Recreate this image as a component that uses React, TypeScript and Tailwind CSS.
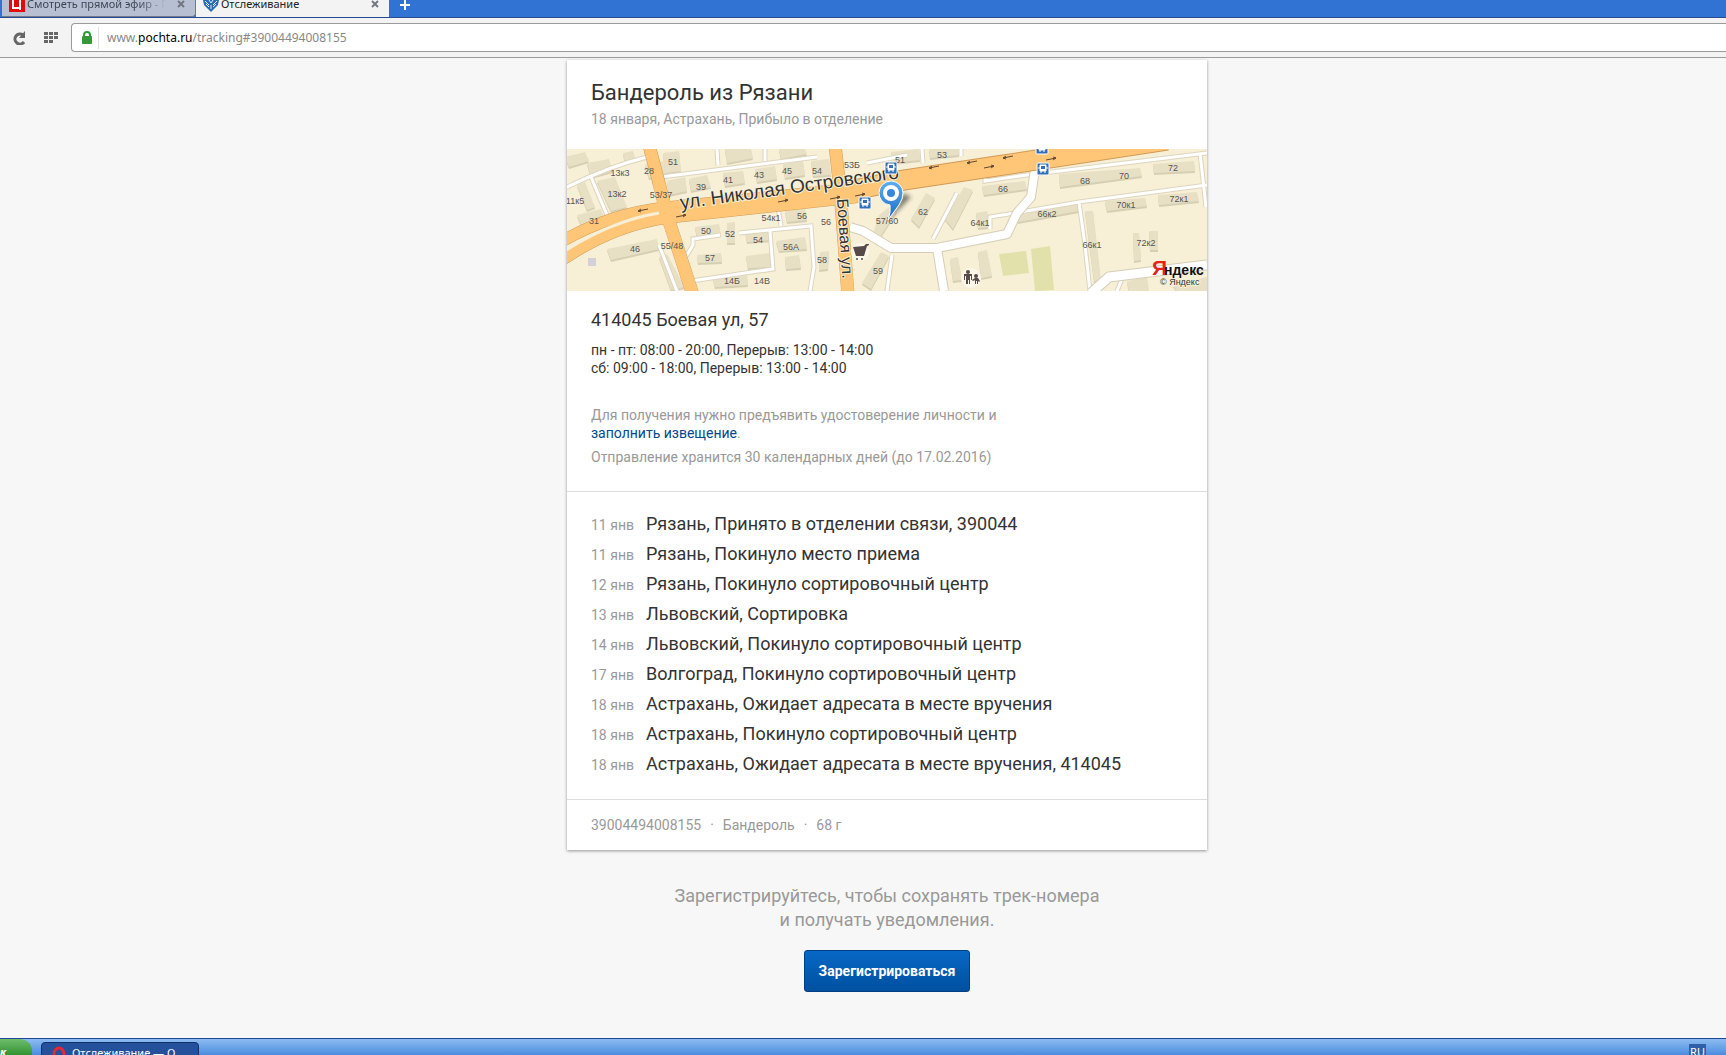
import React from "react";

const ROBOTO = "font-[Roboto,'Noto_Sans',sans-serif]";

type Pt = [number, number];

const buildings: string[] = [
  "M-2 8 L18 3 L22 12 L2 18Z M20 14 L42 10 L46 22 L24 28Z M56 4 L66 2 L69 11 L58 14Z",
  "M30 32 L48 28 L60 58 L44 62Z M10 36 L18 33 L28 58 L20 61Z M10 66 L34 60 L38 72 L14 76Z",
  "M78 16 L96 12 L98 26 L82 29Z M96 4 L112 2 L114 22 L98 24Z",
  "M100 32 L118 28 L120 42 L102 46Z M122 30 L140 26 L144 38 L124 42Z",
  "M156 24 L176 22 L178 34 L158 37Z M188 20 L208 17 L210 30 L190 33Z M216 15 L236 12 L238 26 L218 29Z M244 12 L262 10 L264 26 L246 27Z",
  "M158 0 L184 0 L186 9 L160 14Z M212 0 L238 0 L240 5 L214 10Z",
  "M40 100 L90 90 L92 100 L44 111Z M128 78 L152 75 L154 86 L130 88Z M160 74 L168 73 L168 94 L160 94Z",
  "M178 82 L204 80 L206 91 L180 93Z M218 62 L238 60 L240 71 L220 73Z M179 107 L203 104 L204 118 L181 119Z",
  "M209 92 L238 88 L240 100 L212 102Z M218 108 L232 106 L234 119 L219 120Z M253 103 L262 102 L261 120 L252 121Z",
  "M130 106 L154 104 L155 113 L131 114Z M146 129 L180 126 L181 136 L148 138Z M92 108 L100 105 L118 138 L104 141Z",
  "M314 103 L322 107 L304 140 L295 134Z M312 66 L325 56 L330 62 L312 90 L306 85Z",
  "M344 70 L359 44 L368 49 L352 78Z M378 70 L397 38 L406 41 L386 80Z",
  "M415 37 L458 32 L460 40 L417 46Z M450 63 L510 53 L512 62 L451 73Z M492 25 L573 19 L575 27 L493 38Z",
  "M538 52 L578 49 L580 57 L540 62Z M586 15 L627 12 L628 22 L587 24Z M591 46 L630 43 L632 52 L592 56Z",
  "M518 62 L526 62 L534 132 L527 132Z M566 84 L572 84 L574 111 L567 112Z M582 82 L591 82 L591 101 L583 101Z",
  "M383 110 L391 108 L395 131 L386 132Z M411 103 L420 101 L425 127 L414 129Z M409 64 L420 62 L423 78 L411 79Z",
  "M324 3 L352 0 L353 11 L325 14Z M362 0 L391 0 L392 6 L363 9Z M560 132 L580 128 L582 142 L562 142Z M606 136 L640 128 L640 142 L610 142Z",
];

const whiteRoads: string[] = [
  "M-4 40 Q40 18 80 8",
  "M24 28 L40 66",
  "M94 28 L250 8",
  "M150 0 L151 16 M198 0 L198 12 M300 14 L340 6 M355 0 L356 14 M394 0 L394 7",
  "M211 58 L214 77 M118 109 L126 96 L126 90 L153 86 M172 84 L244 77 L247 118 L243 142",
  "M203 82 L206 120 L124 132 M92 96 L110 142",
  "M418 24 L418 32 L460 26 L640 4 M633 4 L639 58",
  "M366 90 L390 44 M423 80 L423 68 L448 64 L512 53 L640 36 M512 53 L518 96 L523 142 M555 130 L550 142 M325 106 L320 142",
];

const labels: [string, number, number][] = [
  ["13к3", 53, 27], ["28", 82, 25], ["51", 106, 16], ["13к2", 50, 48], ["11к5", 8, 55], ["53/37", 94, 49],
  ["31", 27, 75], ["39", 134, 41], ["41", 161, 34], ["43", 192, 29], ["45", 220, 25], ["54", 250, 25],
  ["53Б", 285, 19], ["46", 68, 103], ["55/48", 105, 100], ["50", 139, 85], ["52", 163, 88], ["54", 191, 94],
  ["54к1", 204, 72], ["56", 235, 70], ["56", 259, 76], ["56А", 224, 101], ["57", 143, 112], ["58", 255, 114],
  ["14Б", 165, 135], ["14В", 195, 135], ["57/60", 320, 75], ["59", 311, 125], ["62", 356, 66], ["51", 333, 14],
  ["53", 375, 9], ["66", 436, 43], ["64к1", 413, 77], ["66к2", 480, 68], ["68", 518, 35], ["70", 557, 30],
  ["72", 606, 22], ["70к1", 559, 59], ["72к1", 612, 53], ["66к1", 525, 99], ["72к2", 579, 97],
];

const arrowsLeft: Pt[] = [[76, 61], [367, 18], [405, 13], [441, 8]];
const arrowsRight: Pt[] = [[114, 67], [216, 52], [268, 49], [293, 46], [422, 18], [484, 10]];

function BusStop({ x, y }: { x: number; y: number }) {
  return (
    <g transform={`translate(${x} ${y})`}>
      <rect x="-6" y="-6" width="12" height="12" rx="1" fill="#3271b5" stroke="#fff" strokeWidth="1" />
      <path d="M-3 -4 h6 v6 h-6z M-4 -2 v2 M4 -2 v2 M-2 2 v2 M2 2 v2" fill="#fff" stroke="#fff" />
      <rect x="-2" y="-3" width="4" height="3" fill="#3271b5" />
    </g>
  );
}

function MapPicture() {
  return (
    <svg
      viewBox="0 0 640 142"
      preserveAspectRatio="xMidYMid slice"
      className="block h-[142px] w-full"
      fontFamily="'Liberation Sans', sans-serif"
      role="img"
      aria-label="Карта: Боевая ул, 57"
    >
      <defs>
        <linearGradient id="pin" gradientUnits="userSpaceOnUse" x1="0" y1="32" x2="0" y2="71">
          <stop offset="0" stopColor="#5eb0ee" />
          <stop offset="1" stopColor="#1c68c4" />
        </linearGradient>
        <filter id="soft" x="-50%" y="-50%" width="200%" height="200%">
          <feGaussianBlur stdDeviation="2" />
        </filter>
      </defs>
      <rect width="640" height="142" fill="#f7efd6" />
      <path d="M464 100 L483 97 L487 141 L468 142Z M432 105 L459 102 L462 124 L436 127Z" fill="#e2e1ac" />
      {buildings.map((d) => (
        <g key={d}>
          <path d={d} fill="#d6cfb4" transform="translate(0 2)" />
          <path d={d} fill="#e8e0c5" />
        </g>
      ))}
      <rect x="21" y="109" width="8" height="8" fill="#d5cfda" />
      <g fill="none" stroke="#ddd5be" strokeWidth="5">
        {whiteRoads.map((d) => <path key={d} d={d} />)}
      </g>
      <g fill="none" stroke="#fff" strokeWidth="3">
        {whiteRoads.map((d) => <path key={d} d={d} />)}
      </g>
      {[
        { color: "#d5cdb6", extra: 2 },
        { color: "#fff", extra: 0 },
      ].map(({ color, extra }) => (
        <g key={color} fill="none" stroke={color} strokeLinejoin="round">
          <path d="M283 78 L296 82 L324 99 L370 99 L440 85 L450 64 L464 48 L468 20" strokeWidth={8 + extra} />
          <path d="M370 99 L377 142" strokeWidth={8 + extra} />
          <path d="M524 144 L542 128 L640 116" strokeWidth={9 + extra} />
        </g>
      ))}
      {[
        { color: "#d39a55", extra: 1 },
        { color: "#ffc677", extra: 0 },
      ].map(({ color, extra }) => (
        <g key={color} fill="none" stroke={color}>
          <path d="M82 -4 L92 34 L100 66 L126 146" strokeWidth={12 + extra} />
          <path d="M268 -4 L273 40 L281 146" strokeWidth={12 + extra} />
          <path d="M-6 93 Q40 66 94 59 L300 38" strokeWidth={11 + extra} />
          <path d="M-6 112 Q42 78 98 69 L300 47" strokeWidth={11 + extra} />
          <path d="M268 45 L330 32 L430 17 L600 -9" strokeWidth={19 + extra * 2} />
        </g>
      ))}
      <path d="M92 35 L100 66 L126 146 M273 36 L281 146" fill="none" stroke="#ffc677" strokeWidth="12" />
      <path d="M-4 103 Q44 72 92 64" fill="none" stroke="#f7efd6" strokeWidth="3" />
      <g fill="none" stroke="#5f4631" strokeWidth="1">
        {arrowsLeft.map(([x, y]) => (
          <path key={x} d="M5 -1 L-5 1 M-2 -1 L-5 1 L-2 2" transform={`translate(${x} ${y})`} />
        ))}
        {arrowsRight.map(([x, y]) => (
          <path key={x} d="M-5 1 L5 -1 M2 -2 L5 -1 L2 1" transform={`translate(${x} ${y})`} />
        ))}
      </g>
      <g fontSize="9" fill="#555" textAnchor="middle">
        {labels.map(([text, x, y]) => (
          <text key={`${text}-${x}`} x={x} y={y}>{text}</text>
        ))}
      </g>
      <g fill="#333" stroke="#f7efd6" strokeWidth="2" paintOrder="stroke">
        <text fontSize="19" transform="translate(114 60) rotate(-8)">ул. Николая Островского</text>
        <text fontSize="16" transform="translate(270 50) rotate(86)">Боевая ул.</text>
      </g>
      <BusStop x={298} y={54} />
      <BusStop x={324} y={19} />
      <BusStop x={475} y={-1} />
      <BusStop x={476} y={20} />
      <circle cx="293" cy="103" r="9" fill="#fbf7e9" />
      <g fill="#574b49">
        <path d="M286 98 L297 97 L299 95 L302 95 L302 96 L300 97 L297 107 L289 107Z" />
        <circle cx="290" cy="110" r="1" />
        <circle cx="295" cy="110" r="1" />
      </g>
      <circle cx="404" cy="129" r="10" fill="#fbf7e9" />
      <g fill="#574b49">
        <circle cx="401" cy="123" r="2" />
        <path d="M397 125 h8 v6 h-1 v-4 h-1 v8 h-1 v-4 h-1 v4 h-2 v-8 h-1 v4 h-1Z" />
        <circle cx="409" cy="127" r="2" />
        <path d="M405 131 l3 -2 h3 l2 3 l-1 1 l-1 -1 v3 h-1 v-3 h-1 v3 h-1 v-4 l-2 1Z" />
      </g>
      <path d="M323 70 L344 48 L336 44 Z" fill="#33302a" opacity="0.6" filter="url(#soft)" />
      <path
        d="M321 71 Q324 63 323 56 A12 12 0 1 1 336 44 Q336 50 332 56 L321 71Z"
        fill="url(#pin)"
        stroke="#fff"
        strokeWidth="1"
      />
      <circle cx="324" cy="44" r="8" fill="#fff" />
      <circle cx="324" cy="44" r="4" fill="#3787dc" />
      <g fontFamily="'Liberation Sans Narrow', 'Liberation Sans', sans-serif">
        <text x="585" y="126" fontSize="21" fontWeight="bold" fill="#e5231b">Я</text>
        <text x="597" y="126" fontSize="14" fontWeight="bold" fill="#111">ндекс</text>
      </g>
      <text x="593" y="136" fontSize="9" fill="#333" stroke="#f7efd6" strokeWidth="2" paintOrder="stroke">© Яндекс</text>
    </svg>
  );
}

const events: [string, string][] = [
  ["11 янв", "Рязань, Принято в отделении связи, 390044"],
  ["11 янв", "Рязань, Покинуло место приема"],
  ["12 янв", "Рязань, Покинуло сортировочный центр"],
  ["13 янв", "Львовский, Сортировка"],
  ["14 янв", "Львовский, Покинуло сортировочный центр"],
  ["17 янв", "Волгоград, Покинуло сортировочный центр"],
  ["18 янв", "Астрахань, Ожидает адресата в месте вручения"],
  ["18 янв", "Астрахань, Покинуло сортировочный центр"],
  ["18 янв", "Астрахань, Ожидает адресата в месте вручения, 414045"],
];

function CloseIcon() {
  return (
    <svg viewBox="0 0 8 8" className="size-2">
      <path d="M1 1 L7 7 M7 1 L1 7" stroke="#737780" strokeWidth="2" />
    </svg>
  );
}

function BrowserTabs() {
  return (
    <div className="flex h-[18px] items-start overflow-hidden border-b border-[#264a94] bg-[#3173d3] pl-[2px] text-[11px] leading-[18px]">
      <div className="flex h-[17px] w-[194px] items-start gap-[2px] rounded-br border-r border-b border-[#70798a] bg-[#b6c0d2] pr-[10px] pl-[7px] text-[#3b4352]">
        <svg viewBox="0 0 16 12" className="h-3 w-4 shrink-0">
          <rect width="16" height="12" fill="#e30b0b" />
          <path d="M4 0 V8 H11 V0 M11 8 V10" fill="none" stroke="#fff" strokeWidth="2" />
        </svg>
        <span className="-mt-[5px] w-[139px] shrink-0 overflow-hidden bg-linear-to-r from-[#3b4352] from-80% to-[#b6c0d2] bg-clip-text whitespace-nowrap text-transparent">
          Смотреть прямой эфир - Пе
        </span>
        <button aria-label="Закрыть вкладку" className="ml-auto flex h-2"><CloseIcon /></button>
      </div>
      <div className="flex h-[18px] w-[193px] items-start gap-[2px] bg-[#f3f3f3] pr-[10px] pl-[7px] text-[#222]">
        <svg viewBox="0 0 16 12" className="h-3 w-4 shrink-0">
          <path d="M0 0 H16 L15 5 L11 9 L8 12 L5 9 L1 5Z" fill="#2b6cb5" />
          <path d="M6 0 L8 3 L10 0 M2 1 L6 5 M14 1 L10 5 M3 4 L6 7 M13 4 L10 7 M8 5 V9" fill="none" stroke="#dcebfa" />
        </svg>
        <span className="-mt-[5px] grow whitespace-nowrap">Отслеживание</span>
        <button aria-label="Закрыть вкладку" className="flex h-2"><CloseIcon /></button>
      </div>
      <button aria-label="Новая вкладка" className="ml-[10px]">
        <svg viewBox="0 0 12 12" className="size-3">
          <path d="M6 0 V10 M1 5 H11" stroke="#fff" strokeWidth="2" />
        </svg>
      </button>
    </div>
  );
}

function AddressBar() {
  return (
    <div className="flex h-10 items-center border-b border-[#9b9b9b] bg-[#f3f3f3] pl-3">
      <button aria-label="Обновить" className="mr-[18px]">
        <svg viewBox="0 0 14 14" className="size-[14px]" fill="none">
          <path d="M12 11 A5 5 0 1 1 11 4" stroke="#666" strokeWidth="3" />
          <path d="M13 0 V7 H7Z" fill="#666" />
        </svg>
      </button>
      <button aria-label="Экспресс-панель" className="mr-[12px]">
        <svg viewBox="0 0 15 12" className="h-3 w-[15px]" fill="#666">
          <path d="M0 0h4v3h-4z M5 0h4v3h-4z M10 0h4v3h-4z M0 4h4v3h-4z M5 4h4v3h-4z M10 4h4v3h-4z M0 8h4v3h-4z M5 8h4v3h-4z" />
        </svg>
      </button>
      <div className="flex h-[29px] grow items-center rounded-l border border-r-0 border-[#9b9b9b] bg-white pl-[10px]">
        <svg viewBox="0 0 10 13" className="h-[13px] w-[10px]">
          <path d="M2 6 V4 A3 3 0 0 1 8 4 V6" fill="none" stroke="#2f9a36" strokeWidth="2" />
          <rect y="5" width="10" height="8" rx="1" fill="#2f9a36" />
        </svg>
        <a
          href="#39004494008155"
          className="ml-[6px] border-l border-[#ddd] pl-2 text-[12px] leading-[22px] text-[#888]"
        >
          www.<span className="text-black">pochta.ru</span>/tracking#39004494008155
        </a>
      </div>
    </div>
  );
}

function Taskbar() {
  return (
    <footer className="flex h-[17px] items-start overflow-hidden border-t border-[#1f4796] bg-linear-to-b from-[#8dbcf0] to-[#4a8ce0] font-['Noto_Sans',sans-serif] text-[11px]">
      <button className="h-4 w-8 shrink-0 overflow-hidden rounded-tr-xl bg-linear-to-b from-[#6fbd6c] to-[#2f9331] text-left font-bold text-white italic">
        <span className="block leading-[26px]">к</span>
      </button>
      <button className="mt-[3px] ml-[9px] flex h-4 w-[158px] items-start rounded-t-sm border border-[#14306b] bg-[#24509c] pl-[10px] text-white">
        <svg viewBox="0 0 14 12" className="mt-[3px] h-3 w-[14px] shrink-0">
          <ellipse cx="7" cy="8" rx="5" ry="6" fill="none" stroke="#e02a35" strokeWidth="3" />
        </svg>
        <span className="ml-[6px] leading-[20px] whitespace-nowrap">Отслеживание — О</span>
      </button>
      <span className="mt-[5px] mr-[20px] ml-auto bg-[#2f5fa8] px-[1px] leading-[16px] text-white">RU</span>
    </footer>
  );
}

export default function App() {
  return (
    <div className={`flex min-h-screen flex-col bg-[#f7f7f7] text-[#333] ${ROBOTO}`}>
      <header className="font-['Noto_Sans',sans-serif]">
        <BrowserTabs />
        <AddressBar />
      </header>

      <main className="flex grow flex-col items-center pt-[2px] pl-12">
        <article className="w-full max-w-[640px] bg-white shadow-[0_1px_3px_rgba(0,0,0,0.4)]">
          <div className="px-6 pt-[19px] pb-5">
            <h1 className="text-[22px] leading-[28px]">Бандероль из Рязани</h1>
            <p className="mt-[2px] text-[14px] leading-[20px] text-[#999]">18 января, Астрахань, Прибыло в отделение</p>
          </div>
          <MapPicture />
          <div className="border-b border-[#ddd] px-6 pt-[17px] pb-[25px]">
            <h2 className="text-[18px] leading-[24px]">414045 Боевая ул, 57</h2>
            <p className="mt-[9px] text-[14px] leading-[18px]">
              пн - пт: 08:00 - 20:00, Перерыв: 13:00 - 14:00
              <br />
              сб: 09:00 - 18:00, Перерыв: 13:00 - 14:00
            </p>
            <p className="mt-[29px] text-[14px] leading-[18px] text-[#999]">
              Для получения нужно предъявить удостоверение личности и
              <br />
              <a href="#notice" className="text-[#00498f]">заполнить извещение</a>.
            </p>
            <p className="mt-[6px] text-[14px] leading-[18px] text-[#999]">
              Отправление хранится 30 календарных дней (до 17.02.2016)
            </p>
          </div>
          <ul className="border-b border-[#ddd] px-6 pt-[17px] pb-5">
            {events.map(([date, text]) => (
              <li key={date + text} className="flex h-[30px] items-baseline leading-[30px]">
                <span className="w-[55px] shrink-0 text-[14px] text-[#999]">{date}</span>
                <span className="text-[18px]">{text}</span>
              </li>
            ))}
          </ul>
          <p className="flex gap-[9px] px-6 py-[15px] text-[14px] leading-[20px] text-[#999]">
            <span>39004494008155</span>
            <span>·</span>
            <span>Бандероль</span>
            <span>·</span>
            <span>68 г</span>
          </p>
        </article>

        <p className="mt-[34px] text-center text-[18px] leading-[24px] text-[#999]">
          Зарегистрируйтесь, чтобы сохранять трек-номера
          <br />и получать уведомления.
        </p>
        <button className="mt-[18px] h-[42px] rounded-[3px] border border-[#003f86] bg-linear-to-b from-[#0868c6] to-[#00509f] px-[14px] text-[14px] font-bold whitespace-nowrap text-white">
          Зарегистрироваться
        </button>
      </main>

      <Taskbar />
    </div>
  );
}
